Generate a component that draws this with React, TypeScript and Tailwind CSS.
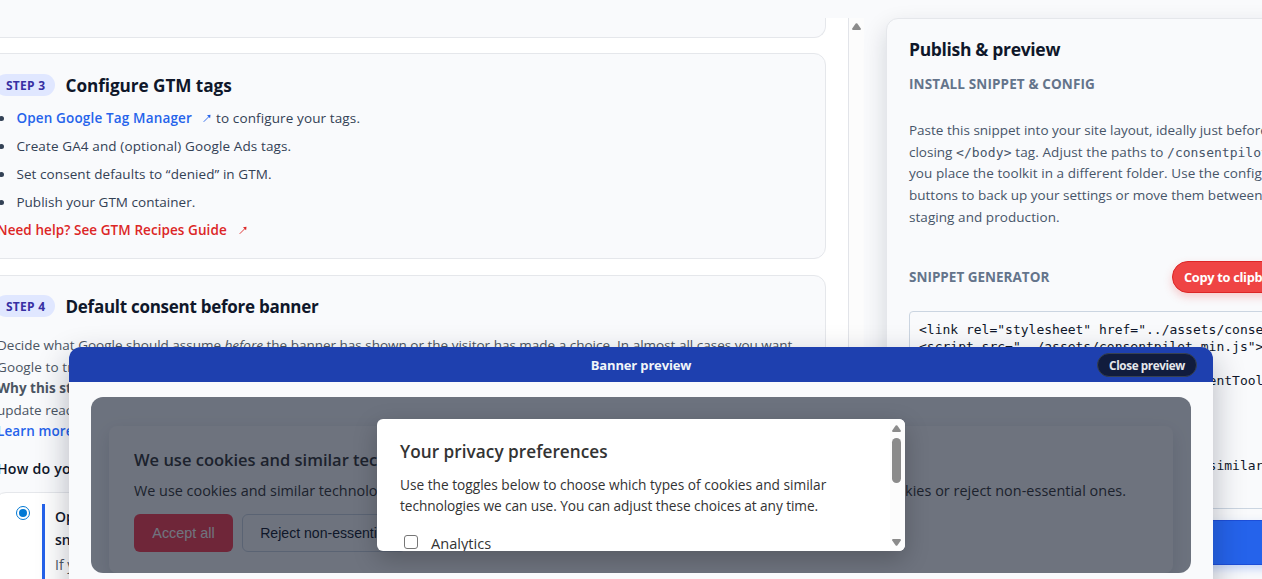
import type { ReactNode } from "react";

const snippet = [
  '<link rel="stylesheet" href="../assets/consentpilot.min.css">',
  '<script src="../assets/consentpilot.min.js"></script>',
  "<script>",
  "  const consentpilotConfig = new ConsentToolkit({",
  '    region: "eu",',
  "    banner: {",
  '    position: "bottom",',
  '    title: "We use cookies",',
  '    description: "We use cookies and similar technologies',
];

function ScrollArrow({ down = false }: { down?: boolean }) {
  return (
    <svg width="9" height="7" viewBox="0 0 9 7" className={down ? "rotate-180" : ""}>
      <path d="M3.7 0.6Q4.5 -0.3 5.3 0.6L8.8 5.4Q9.2 7 8 7H1Q-0.2 7 0.2 5.4Z" fill="#8b8b8b" />
    </svg>
  );
}

function ExternalArrow() {
  return (
    <svg width="8" height="8" viewBox="0 0 8 8" fill="none" stroke="currentColor" strokeWidth="0.9" className="inline-block">
      <path d="M0.7 7.8L6.4 2.1" />
      <path d="M4 1.2L7.5 0.8L7.1 4.3Z" fill="currentColor" stroke="none" />
    </svg>
  );
}

function StepHeader({ step, title }: { step: string; title: ReactNode }) {
  return (
    <div className="flex h-[22px] items-center gap-[11px]">
      <span className="flex h-[22px] w-[60px] shrink-0 items-center justify-end rounded-full bg-[#e0e7ff] pt-px pr-[9.5px] text-[12px] font-bold tracking-[0.3px] text-[#3730a3]">
        {step}
      </span>
      {title}
    </div>
  );
}

function Bullet({ children }: { children: ReactNode }) {
  return (
    <li className="flex h-7 items-center gap-[13px]">
      <span className="-ml-px size-[5px] shrink-0 rounded-full bg-[#334155]" />
      <span className="-ml-[0.6px] flex items-center whitespace-pre tracking-[0.12px]">{children}</span>
    </li>
  );
}

function StepsPanel() {
  return (
    <section className="h-full w-[849px] shrink-0 overflow-hidden border-r border-[#e2e4e9] bg-white">
      <div className="-ml-7 flex w-[854px] flex-col">
        <div className="h-5 rounded-b-xl border border-t-0 border-[#e5e7eb] bg-[#f9fafc]" />

        <div className="mt-[15px] h-[206px] rounded-xl border border-[#e5e7eb] bg-[#f9fafc] pt-5 pl-[22px]">
          <StepHeader
            step="STEP 3"
            title={<h2 className="-ml-[0.5px] pt-0.5 text-[17.2px] font-bold tracking-[-0.07px] text-[#0f172a]">Configure GTM tags</h2>}
          />
          <ul className="mt-2 pl-[5px] text-[13.5px] text-[#334155]">
            <Bullet>
              <a className="font-semibold tracking-[0.16px] text-[#2563eb]">Open Google Tag Manager</a>
              <span className="mr-[5px] ml-[11px] flex text-[#2563eb]">
                <ExternalArrow />
              </span>
              to configure your tags.
            </Bullet>
            <Bullet>Create GA4 and (optional) Google Ads tags.</Bullet>
            <Bullet>
              <span className="tracking-[0.08px]">Set consent defaults to “denied” in GTM.</span>
            </Bullet>
            <Bullet>
              <span className="tracking-[0.02px]">Publish your GTM container.</span>
            </Bullet>
          </ul>
          <a className="flex h-7 items-center gap-3 pl-[2px] text-[13.5px] font-semibold tracking-[0.07px] text-[#dc2626]">
            Need help? See GTM Recipes Guide
            <ExternalArrow />
          </a>
        </div>

        <div className="mt-4 h-[400px] rounded-xl border border-[#e5e7eb] bg-[#f9fafc] pt-[19px] pl-[22px]">
          <StepHeader
            step="STEP 4"
            title={<h2 className="-ml-[0.5px] pt-0.5 text-[17px] font-bold tracking-[-0.27px] text-[#0f172a]">Default consent before banner</h2>}
          />
          <div className="mt-[18px] pl-[2px] text-[13.5px] leading-[21.5px] whitespace-nowrap text-[#4b5563]">
            <p>
              Decide what Google should assume <em>before</em> the banner has shown or the visitor has made a choice. In almost all cases you want
            </p>
            <p className="tracking-[0.1px]">Google to treat</p>
            <p className="font-bold">Why this step</p>
            <p>update reaches</p>
            <p className="font-semibold tracking-[0.1px] text-[#2563eb]">Learn more</p>
          </div>
          <h3 className="mt-[15.5px] pl-[2px] text-[14.2px] leading-[22px] font-semibold tracking-[0.2px] text-[#0f172a]">How do you</h3>
          <div className="mt-[12px] -ml-[1px] flex h-[120px] w-[800px] rounded-xl border border-[#e5e7eb] bg-white pt-[11px] pl-[21px]">
            <span className="mt-[2px] flex size-[14px] items-center justify-center rounded-full border border-[#0078d4] bg-white">
              <span className="size-[8px] rounded-full bg-[#0078d4]" />
            </span>
            <div className="ml-[12px] border-l-3 border-[#2563eb] pl-[10px] text-[14px] leading-[23px] text-[#4b5563]">
              <p className="pt-px font-semibold text-[#0f172a]">Opt-in</p>
              <p className="font-semibold text-[#0f172a]">snippet</p>
              <p className="pt-[2px]">If you</p>
            </div>
          </div>
        </div>
      </div>
    </section>
  );
}

function PublishCard() {
  return (
    <aside className="z-10 ml-[22px] h-[620px] w-[420px] shrink-0 rounded-xl border border-[#e5e7eb] bg-[#f9fafc] pt-[19px] pl-[22px] shadow-[0_10px_25px_rgba(15,23,42,0.16)]">
      <h2 className="text-[17.5px] leading-[22px] font-bold tracking-[-0.33px] text-[#0f172a]">Publish &amp; preview</h2>
      <h3 className="mt-[14px] text-[13.5px] leading-5 font-bold tracking-[0.12px] text-[#64748b]">INSTALL SNIPPET &amp; CONFIG</h3>
      <p className="mt-[26px] text-[13.5px] leading-[21.7px] whitespace-nowrap text-[#475569]">
        Paste this snippet into your site layout, ideally just before the
        <br />
        closing <code className="font-['DejaVu_Sans_Mono',monospace] text-[13px] leading-none tracking-[0.12px]">&lt;/body&gt;</code>
        <span className="tracking-[0.1px]"> tag. Adjust the paths to </span>
        <code className="font-['DejaVu_Sans_Mono',monospace] text-[13px] leading-none">/consentpilot</code> if
        <br />
        <span className="tracking-[0.06px]">you place the toolkit in a different folder. Use the config</span>
        <br />
        buttons to back up your settings or move them between
        <br />
        <span className="tracking-[0.06px]">staging and production.</span>
      </p>
      <div className="mt-[32px] flex h-8 items-center">
        <h3 className="w-[263px] shrink-0 pt-0.5 text-[13.5px] font-bold text-[#64748b]">SNIPPET GENERATOR</h3>
        <button className="flex h-8 w-[136px] shrink-0 items-center rounded-full border border-[#dc2626] bg-[#ef4444] pt-[3px] pl-[11px] text-[12.8px] font-bold tracking-[-0.3px] whitespace-nowrap text-white shadow-[0_4px_8px_rgba(239,68,68,0.25)]">
          Copy to clipboard
        </button>
      </div>
      <pre className="mt-[18px] h-[198px] w-[380px] overflow-hidden rounded-sm border border-[#cbd5e1] bg-[#f9fafc] pt-[9px] pl-[9px] font-['DejaVu_Sans_Mono',monospace] text-[13px] leading-[17px] text-[#0f172a]">
        {snippet.join("\n")}
      </pre>
      <div className="mt-[11px] h-[45px] w-[380px] rounded-lg border border-[#1d4ed8] bg-[#2563eb] shadow-[0_4px_10px_rgba(37,99,235,0.25)]" />
    </aside>
  );
}

function PreferencesDialog() {
  return (
    <div className="absolute top-[22px] left-[286px] flex h-[132px] w-[528px] overflow-hidden rounded-md bg-white shadow-[0_8px_24px_rgba(0,0,0,0.22)]">
      <div className="flex-1 pt-[21px] pl-[23px] whitespace-nowrap text-[#333333]">
        <h2 className="text-[17.2px] leading-6 font-semibold tracking-[0.03px]">Your privacy preferences</h2>
        <p className="mt-[10px] text-[13.7px] leading-[21.3px] tracking-[-0.005px]">
          Use the toggles below to choose which types of cookies and similar
        </p>
        <p className="text-[13.7px] leading-[21.3px] tracking-[-0.08px]">
          technologies we can use. You can adjust these choices at any time.
        </p>
        <label className="mt-[15px] ml-1 flex h-[22px] items-center gap-[13px] text-[14.6px]">
          <span className="-mt-[2px] size-[14px] rounded-[3px] border border-[#767676] bg-white" />
          <span className="leading-[22px]">Analytics</span>
        </label>
      </div>
      <div className="flex w-[15px] flex-col items-center bg-[#fcfcfc] pt-[6px] pr-[2px]">
        <ScrollArrow />
        <div className="mt-[6px] mb-auto h-[45px] w-[9px] rounded-full bg-[#8b8b8b]" />
        <div className="mb-[5px]">
          <ScrollArrow down />
        </div>
      </div>
    </div>
  );
}

function BannerPreview() {
  return (
    <div className="absolute top-[347px] left-[69px] z-20 h-[260px] w-[1144px] overflow-hidden rounded-t-xl bg-[#f9fafc]">
      <header className="grid h-[35px] grid-cols-[1fr_auto_1fr] items-center bg-[#1e40af] px-4">
        <span />
        <h2 className="pt-0.5 text-[13px] font-bold tracking-[-0.16px] text-[#f1f5f9]">Banner preview</h2>
        <button className="flex h-6 w-[100px] items-center justify-center justify-self-end rounded-full border border-[#374151] bg-[#111c3d] pt-0.5 text-[11.7px] font-bold tracking-[-0.38px] text-[#e5e7eb]">
          Close preview
        </button>
      </header>
      <div className="relative mx-[22px] mt-[15px] h-[176px] overflow-hidden rounded-xl bg-[#f8fafc]">
        <div className="mx-[18px] mt-[29px] h-[147px] rounded-lg bg-[#fcfcfc] pt-[22px] pl-[25px] whitespace-nowrap text-[#333333] shadow-[0_6px_18px_rgba(15,23,42,0.13)]">
          <h2 className="text-[16.5px] leading-6 font-semibold">We use cookies and similar technologies</h2>
          <p className="mt-2 flex w-[992px] justify-between text-[14.4px] leading-[22px]">
            <span>We use cookies and similar technologies to run this site.</span>
            <span className="tracking-[0.04px]">You can accept all cookies or reject non-essential ones.</span>
          </p>
          <div className="mt-3 flex gap-[9px] font-['Liberation_Sans',Arial,sans-serif]">
            <button className="h-[38px] w-[99px] rounded-md bg-[#ff3c50] pt-px text-[14.4px] text-white">Accept all</button>
            <button className="h-[38px] w-[164px] rounded-md border border-[#cbd5e1] pt-px text-[14.1px] text-[#0f172a]">Reject non-essential</button>
          </div>
        </div>
        <div className="absolute inset-0 bg-[rgba(15,23,42,0.6)]" />
        <PreferencesDialog />
      </div>
    </div>
  );
}

export default function App() {
  return (
    <div className="relative h-[579px] w-[1262px] overflow-hidden bg-[#f9fafc] pt-[18px] font-['Open_Sans','Noto_Sans',sans-serif]">
      <main className="flex h-[561px]">
        <StepsPanel />
        <div className="flex w-[15px] shrink-0 justify-center bg-[#fcfcfc] pt-[5px]">
          <ScrollArrow />
        </div>
        <PublishCard />
      </main>
      <div className="absolute top-[347px] left-[69px] z-10 h-[260px] w-[1144px] rounded-t-xl shadow-[0_12px_32px_rgba(15,23,42,0.3)]" />
      <BannerPreview />
    </div>
  );
}
